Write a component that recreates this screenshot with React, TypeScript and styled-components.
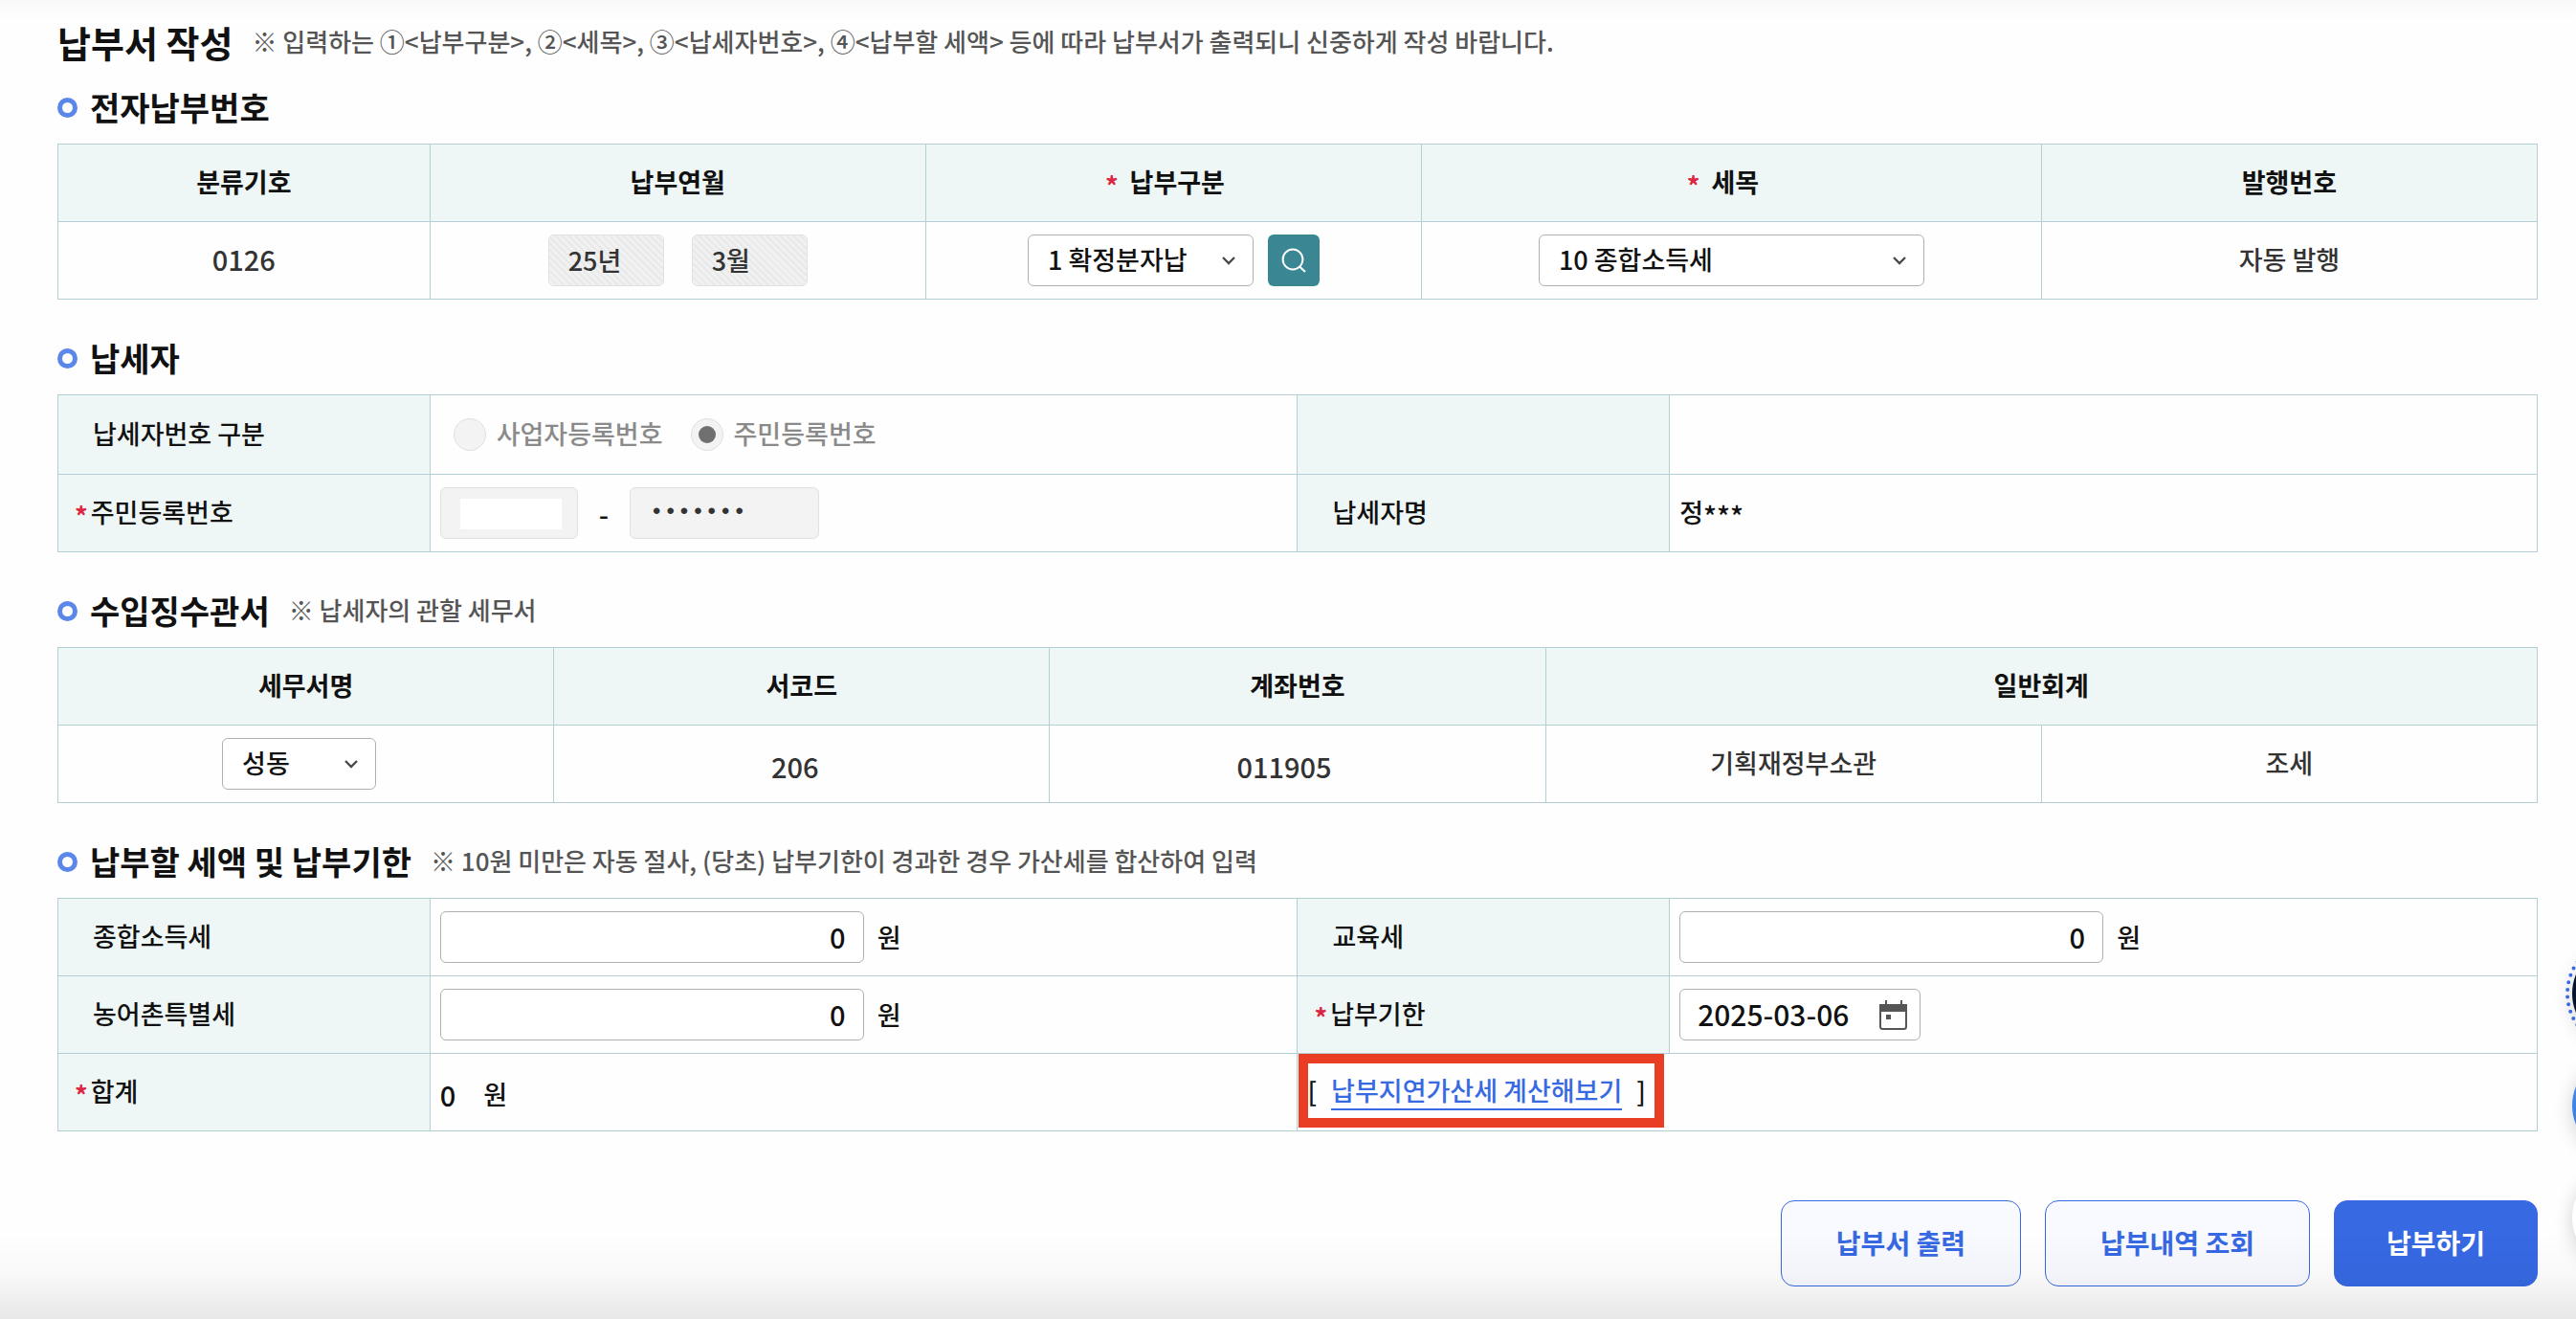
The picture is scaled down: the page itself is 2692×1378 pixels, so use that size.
import React, { useState } from "react";
import styled, { createGlobalStyle, css } from "styled-components";

const color = {
  ink: "#111111",
  value: "#333333",
  note: "#555555",
  muted: "#8a8a8a",
  line: "#b4cfd3",
  head: "#eef7f6",
  field: "#b0b0b0",
  fieldOff: "#dfe1e3",
  off: "#f3f3f3",
  teal: "#3a8793",
  blue: "#3769e3",
  ring: "#5b87ea",
  red: "#dc2743",
  mark: "#ea3e24",
};

const GlobalStyle = createGlobalStyle`
  *, *::before, *::after { box-sizing: border-box; }
  body {
    margin: 0;
    background: #fefefe;
    color: ${color.ink};
    font-family: "Noto Sans CJK KR", sans-serif;
    font-size: 27px;
    font-weight: 500;
    line-height: 40px;
    overflow-x: hidden;
  }
  button, input, select { font: inherit; color: inherit; margin: 0; }
`;

const Page = styled.main`
  min-height: 100vh;
  padding: 18px 40px 34px 60px;
  background: linear-gradient(#f8f8f8, rgba(254, 254, 254, 0) 20px);
`;

const TitleRow = styled.header`
  display: flex;
  align-items: center;
  gap: 20px;
  height: 52px;
`;

const PageTitle = styled.h1`
  margin: 0;
  font-size: 38px;
  line-height: 52px;
  font-weight: 700;
`;

const Note = styled.p`
  margin: 0;
  color: ${color.note};
  font-size: 26px;
  padding-bottom: 2px;
`;

const Section = styled.section<{ $first?: boolean }>`
  margin-top: ${(p) => (p.$first ? 17 : 36)}px;
`;

const Heading = styled.div`
  display: flex;
  align-items: center;
  gap: 20px;
  height: 50px;
  margin-bottom: 13px;
`;

const SectionTitle = styled.h2`
  display: flex;
  align-items: center;
  gap: 13px;
  margin: 0;
  font-size: 34px;
  line-height: 50px;
  font-weight: 700;

  &::before {
    content: "";
    width: 21px;
    height: 21px;
    border: 5px solid ${color.ring};
    border-radius: 50%;
  }
`;

const Table = styled.table`
  width: 100%;
  table-layout: fixed;
  border-collapse: collapse;
`;

const Row = styled.tr<{ $tall?: boolean }>`
  height: ${(p) => (p.$tall ? 83 : 81)}px;
`;

const cell = css`
  border: 1px solid ${color.line};
  padding: 0 10px;
`;

const HeadCell = styled.th<{ $required?: boolean }>`
  ${cell}
  background: ${color.head};
  font-weight: 700;
  padding-right: ${(p) => (p.$required ? 28 : 10)}px;
  padding-bottom: 3px;
`;

const LabelCell = styled.th<{ $required?: boolean }>`
  ${cell}
  background: ${color.head};
  font-weight: 500;
  text-align: left;
  padding-left: ${(p) => (p.$required ? 17 : 36)}px;
  padding-bottom: 2px;
`;

const CenterCell = styled.td<{ $trail?: number }>`
  ${cell}
  color: ${color.value};
  text-align: center;
  padding-right: ${(p) => 10 + (p.$trail ?? 0)}px;
`;

const Cell = styled.td<{ $raised?: boolean }>`
  ${cell}
  padding-bottom: ${(p) => (p.$raised ? 3 : 0)}px;
`;

const Star = styled.span<{ $wide?: boolean }>`
  color: ${color.red};
  font-weight: 700;
  line-height: 20px;
  vertical-align: -4px;
  margin-right: ${(p) => (p.$wide ? 12 : 3)}px;
`;

const MaskStars = styled.span`
  font-size: 29px;
  line-height: 20px;
  vertical-align: -5px;
`;

const Digits = styled.span`
  font-size: 29px;
`;

const Raised = styled.span`
  display: inline-block;
  padding-bottom: 3px;
`;

const Dropped = styled.span`
  display: inline-block;
  padding-top: 5px;
`;

const Line = styled.div<{ $gap?: number; $center?: boolean; $indent?: boolean }>`
  display: flex;
  align-items: center;
  justify-content: ${(p) => (p.$center ? "center" : "flex-start")};
  gap: ${(p) => p.$gap ?? 14}px;
  padding-left: ${(p) => (p.$indent ? 14 : 0)}px;
`;

const TextField = styled.input<{ $width: number; $amount?: boolean; $hatched?: boolean }>`
  width: ${(p) => p.$width}px;
  height: 54px;
  padding: 0 18px 2px 20px;
  border: 1px solid ${color.field};
  border-radius: 6px;
  background: #ffffff;
  outline: none;
  ${(p) =>
    p.$amount &&
    css`
      text-align: right;
      font-size: 29px;
    `}
  &:disabled {
    border-color: ${color.fieldOff};
    background: ${(p) =>
      p.$hatched
        ? "repeating-linear-gradient(45deg, #e8e9ea 0 2px, #f1f1f1 2px 5px)"
        : color.off};
    color: ${color.value};
    opacity: 1;
  }
  &[type="password"] {
    font-family: "Liberation Mono", monospace;
    font-size: 24px;
  }
`;

const Masked = styled.div`
  position: relative;
  display: flex;

  &::after {
    content: "";
    position: absolute;
    inset: 12px 17px 10px 21px;
    background: #ffffff;
  }
`;

const SelectBox = styled.div<{ $width: number }>`
  position: relative;
  width: ${(p) => p.$width}px;

  svg {
    position: absolute;
    right: 18px;
    top: 22px;
    pointer-events: none;
  }
`;

const Select = styled.select`
  appearance: none;
  display: block;
  width: 100%;
  height: 54px;
  padding: 0 44px 2px 20px;
  border: 1px solid ${color.field};
  border-radius: 6px;
  background: #ffffff;
  color: ${color.ink};
`;

const SearchButton = styled.button`
  display: grid;
  place-items: center;
  width: 54px;
  height: 54px;
  padding: 0;
  border: 0;
  border-radius: 6px;
  background: ${color.teal};
`;

const RadioLabel = styled.label`
  display: flex;
  align-items: center;
  gap: 11px;
  color: ${color.muted};
`;

const Radio = styled.input`
  appearance: none;
  display: grid;
  place-items: center;
  width: 34px;
  height: 34px;
  border: 1px solid #e0e0e0;
  border-radius: 50%;
  background: ${color.off};

  &:checked::before {
    content: "";
    width: 18px;
    height: 18px;
    border-radius: 50%;
    background: #707070;
  }
`;

const DateBox = styled.div`
  display: flex;
  align-items: center;
  width: 252px;
  height: 54px;
  padding: 0 13px 0 18px;
  border: 1px solid ${color.field};
  border-radius: 6px;
  background: #ffffff;
`;

const DateInput = styled.input`
  flex: 1;
  min-width: 0;
  padding: 0 0 3px;
  border: 0;
  background: none;
  outline: none;
  font-size: 30px;
`;

const IconButton = styled.button`
  display: grid;
  padding: 0;
  border: 0;
  background: none;
`;

const MarkedLink = styled.span`
  position: relative;
  display: inline-flex;
  gap: 15px;

  &::after {
    content: "";
    position: absolute;
    inset: -19px -19px -18px -9px;
    border: 10px solid ${color.mark};
    pointer-events: none;
  }
`;

const Link = styled.a`
  color: ${color.blue};
  text-decoration: none;
  border-bottom: 2px solid ${color.blue};
  line-height: 38px;
`;

const Actions = styled.footer`
  display: flex;
  justify-content: flex-end;
  gap: 25px;
  margin-top: 72px;
`;

const ActionButton = styled.button<{ $primary?: boolean }>`
  height: 90px;
  padding: 0 ${(p) => (p.$primary ? 54 : 57)}px 2px;
  border: 1px solid ${color.blue};
  border-radius: 14px;
  background: ${(p) => (p.$primary ? color.blue : "#f8faff")};
  color: ${(p) => (p.$primary ? "#ffffff" : color.blue)};
  font-size: 28px;
  font-weight: 700;
`;

const BottomShade = styled.div`
  position: fixed;
  inset: auto 0 0 0;
  height: 90px;
  background: linear-gradient(rgba(0, 0, 0, 0), rgba(0, 0, 0, 0.025) 50%, rgba(0, 0, 0, 0.09));
  pointer-events: none;
`;

const Floating = styled.nav`
  position: fixed;
  right: -100px;
  bottom: 54px;
  display: flex;
  flex-direction: column;
  gap: 13px;
`;

const FloatButton = styled.button<{ $fill: string }>`
  position: relative;
  width: 104px;
  height: 104px;
  padding: 0;
  border: 0;
  border-radius: 50%;
  background: ${(p) => p.$fill};
  box-shadow: 0 4px 20px rgba(0, 0, 0, 0.18);

  svg {
    position: absolute;
    inset: -8px;
  }
`;

const Chevron = () => (
  <svg width="16" height="11" viewBox="0 0 16 11" fill="none" aria-hidden="true">
    <path d="M2 2l6 6 6-6" stroke="#4a4a4a" strokeWidth="2.4" />
  </svg>
);

const SearchIcon = () => (
  <svg width="28" height="28" viewBox="0 0 28 28" fill="none" aria-hidden="true">
    <circle cx="13" cy="13" r="10.4" stroke="#fff" strokeWidth="2" />
    <path d="M20 20.5l6 5.5" stroke="#fff" strokeWidth="2" />
  </svg>
);

const CalendarIcon = () => (
  <svg width="29" height="31" viewBox="0 0 29 31" aria-hidden="true">
    <path d="M7 0v6M23 0v6" stroke="#555" strokeWidth="2" />
    <rect x="1" y="5" width="27" height="25" rx="2.5" fill="#fff" stroke="#555" strokeWidth="2" />
    <path d="M0 4h29v8H0z" fill="#555" />
    <path d="M7 15h5v5H7z" fill="#555" />
  </svg>
);

const DottedRing = () => (
  <svg width="120" height="120" viewBox="0 0 120 120" fill="none" aria-hidden="true">
    <circle
      cx="60"
      cy="60"
      r="57"
      stroke={color.blue}
      strokeWidth="4"
      strokeLinecap="round"
      strokeDasharray="0 7.786"
      strokeDashoffset="3.9"
    />
  </svg>
);

function Dropdown({ label, width, options }: { label: string; width: number; options: string[] }) {
  return (
    <SelectBox $width={width}>
      <Select aria-label={label} defaultValue={options[0]}>
        {options.map((o) => (
          <option key={o}>{o}</option>
        ))}
      </Select>
      <Chevron />
    </SelectBox>
  );
}

function Amount({ id }: { id: string }) {
  const [value, setValue] = useState("0");
  return (
    <Line>
      <TextField id={id} $width={443} $amount value={value} onChange={(e) => setValue(e.target.value)} />
      <span>원</span>
    </Line>
  );
}

function Columns({ widths }: { widths: number[] }) {
  return (
    <colgroup>
      {widths.map((w, i) => (
        <col key={i} style={{ width: `${w}%` }} />
      ))}
    </colgroup>
  );
}

export default function App() {
  return (
    <>
      <GlobalStyle />
      <Page>
        <TitleRow>
          <PageTitle>납부서 작성</PageTitle>
          <Note>
            ※ 입력하는 ①&lt;납부구분&gt;, ②&lt;세목&gt;, ③&lt;납세자번호&gt;, ④&lt;납부할 세액&gt; 등에 따라
            납부서가 출력되니 신중하게 작성 바랍니다.
          </Note>
        </TitleRow>

        <Section $first>
          <Heading>
            <SectionTitle>전자납부번호</SectionTitle>
          </Heading>
          <Table>
            <Columns widths={[15, 20, 20, 25, 20]} />
            <thead>
              <Row>
                <HeadCell scope="col">분류기호</HeadCell>
                <HeadCell scope="col">납부연월</HeadCell>
                <HeadCell scope="col" $required>
                  <Star $wide>*</Star>납부구분
                </HeadCell>
                <HeadCell scope="col" $required>
                  <Star $wide>*</Star>세목
                </HeadCell>
                <HeadCell scope="col">발행번호</HeadCell>
              </Row>
            </thead>
            <tbody>
              <Row>
                <CenterCell>
                  <Raised>
                    <Digits>0126</Digits>
                  </Raised>
                </CenterCell>
                <CenterCell>
                  <Line $center $gap={29}>
                    <TextField aria-label="납부연도" $width={121} $hatched disabled defaultValue="25년" />
                    <TextField aria-label="납부월" $width={121} $hatched disabled defaultValue="3월" />
                  </Line>
                </CenterCell>
                <CenterCell>
                  <Line $center $gap={15}>
                    <Dropdown label="납부구분" width={236} options={["1 확정분자납"]} />
                    <SearchButton aria-label="납부구분 조회">
                      <SearchIcon />
                    </SearchButton>
                  </Line>
                </CenterCell>
                <CenterCell>
                  <Line $center>
                    <Dropdown label="세목" width={403} options={["10 종합소득세"]} />
                  </Line>
                </CenterCell>
                <CenterCell>
                  <Raised>자동 발행</Raised>
                </CenterCell>
              </Row>
            </tbody>
          </Table>
        </Section>

        <Section>
          <Heading>
            <SectionTitle>납세자</SectionTitle>
          </Heading>
          <Table>
            <Columns widths={[15, 35, 15, 35]} />
            <tbody>
              <Row $tall>
                <LabelCell scope="row">납세자번호 구분</LabelCell>
                <Cell>
                  <Line $gap={29} $indent>
                    <RadioLabel>
                      <Radio type="radio" name="taxpayer" disabled />
                      <Raised>사업자등록번호</Raised>
                    </RadioLabel>
                    <RadioLabel>
                      <Radio type="radio" name="taxpayer" disabled defaultChecked />
                      <Raised>주민등록번호</Raised>
                    </RadioLabel>
                  </Line>
                </Cell>
                <LabelCell as="td" />
                <Cell />
              </Row>
              <Row>
                <LabelCell scope="row" $required>
                  <Star>*</Star>
                  <label htmlFor="rrn-front">주민등록번호</label>
                </LabelCell>
                <Cell>
                  <Line $gap={22}>
                    <Masked>
                      <TextField id="rrn-front" $width={144} disabled />
                    </Masked>
                    <Digits>-</Digits>
                    <TextField
                      aria-label="주민등록번호 뒷자리"
                      type="password"
                      $width={198}
                      disabled
                      defaultValue="0000000"
                    />
                  </Line>
                </Cell>
                <LabelCell scope="row">납세자명</LabelCell>
                <Cell $raised>
                  정<MaskStars>***</MaskStars>
                </Cell>
              </Row>
            </tbody>
          </Table>
        </Section>

        <Section>
          <Heading>
            <SectionTitle>수입징수관서</SectionTitle>
            <Note>※ 납세자의 관할 세무서</Note>
          </Heading>
          <Table>
            <Columns widths={[20, 20, 20, 20, 20]} />
            <thead>
              <Row>
                <HeadCell scope="col">세무서명</HeadCell>
                <HeadCell scope="col">서코드</HeadCell>
                <HeadCell scope="col">계좌번호</HeadCell>
                <HeadCell scope="colgroup" colSpan={2}>
                  일반회계
                </HeadCell>
              </Row>
            </thead>
            <tbody>
              <Row>
                <CenterCell $trail={14}>
                  <Line $center>
                    <Dropdown label="세무서명" width={161} options={["성동"]} />
                  </Line>
                </CenterCell>
                <CenterCell $trail={14}>
                  <Dropped>
                    <Digits>206</Digits>
                  </Dropped>
                </CenterCell>
                <CenterCell $trail={28}>
                  <Dropped>
                    <Digits>011905</Digits>
                  </Dropped>
                </CenterCell>
                <CenterCell>
                  <Raised>기획재정부소관</Raised>
                </CenterCell>
                <CenterCell>
                  <Raised>조세</Raised>
                </CenterCell>
              </Row>
            </tbody>
          </Table>
        </Section>

        <Section>
          <Heading>
            <SectionTitle>납부할 세액 및 납부기한</SectionTitle>
            <Note>※ 10원 미만은 자동 절사, (당초) 납부기한이 경과한 경우 가산세를 합산하여 입력</Note>
          </Heading>
          <Table>
            <Columns widths={[15, 35, 15, 35]} />
            <tbody>
              <Row>
                <LabelCell scope="row">
                  <label htmlFor="income-tax">종합소득세</label>
                </LabelCell>
                <Cell>
                  <Amount id="income-tax" />
                </Cell>
                <LabelCell scope="row">
                  <label htmlFor="education-tax">교육세</label>
                </LabelCell>
                <Cell>
                  <Amount id="education-tax" />
                </Cell>
              </Row>
              <Row>
                <LabelCell scope="row">
                  <label htmlFor="rural-tax">농어촌특별세</label>
                </LabelCell>
                <Cell>
                  <Amount id="rural-tax" />
                </Cell>
                <LabelCell scope="row" $required>
                  <Star>*</Star>
                  <label htmlFor="due-date">납부기한</label>
                </LabelCell>
                <Cell>
                  <DateBox>
                    <DateInput id="due-date" defaultValue="2025-03-06" />
                    <IconButton aria-label="달력 열기">
                      <CalendarIcon />
                    </IconButton>
                  </DateBox>
                </Cell>
              </Row>
              <Row>
                <LabelCell scope="row" $required>
                  <Star>*</Star>합계
                </LabelCell>
                <Cell>
                  <Dropped>
                    <Line $gap={29}>
                      <Digits>0</Digits>
                      <span>원</span>
                    </Line>
                  </Dropped>
                </Cell>
                <Cell colSpan={2} $raised>
                  <MarkedLink>
                    <span>[</span>
                    <Link href="#late-payment">납부지연가산세 계산해보기</Link>
                    <span>]</span>
                  </MarkedLink>
                </Cell>
              </Row>
            </tbody>
          </Table>
        </Section>

        <Actions>
          <ActionButton>납부서 출력</ActionButton>
          <ActionButton>납부내역 조회</ActionButton>
          <ActionButton $primary>납부하기</ActionButton>
        </Actions>
      </Page>
      <BottomShade />
      <Floating aria-label="바로가기">
        <FloatButton $fill="#07122e" aria-label="챗봇">
          <DottedRing />
        </FloatButton>
        <FloatButton $fill="linear-gradient(#4a90f0, #2f78dc)" aria-label="상담" />
        <FloatButton $fill="#ffffff" aria-label="맨 위로" />
      </Floating>
    </>
  );
}
